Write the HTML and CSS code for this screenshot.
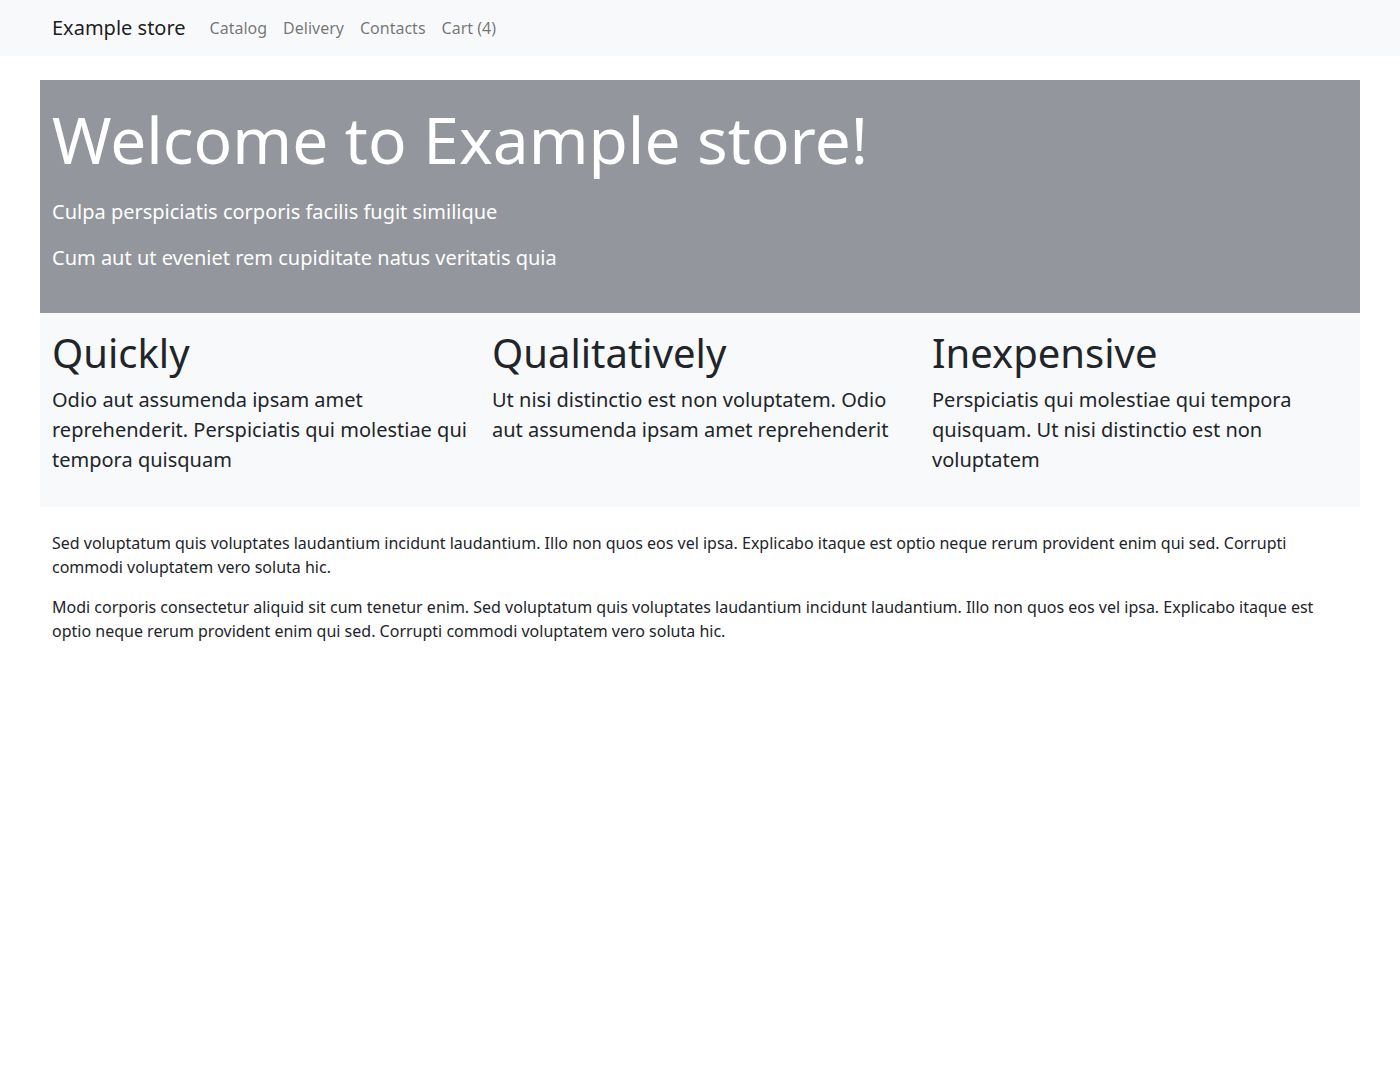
FILE: index.html
```html
<!DOCTYPE html>
<html lang="en">
<head>
<meta charset="utf-8">
<title>Example store</title>
<link rel="stylesheet" href="styles.css">
</head>
<body>
<nav class="navbar">
  <div class="container nav-inner">
    <a class="brand" href="#">Example store</a>
    <ul class="nav">
      <li><a class="nav-link" href="#">Catalog</a></li>
      <li><a class="nav-link" href="#">Delivery</a></li>
      <li><a class="nav-link" href="#">Contacts</a></li>
      <li><a class="nav-link" href="#">Cart (4)</a></li>
    </ul>
  </div>
</nav>
<main class="container main">
  <section class="hero">
    <h1 class="hero-title">Welcome to Example store!</h1>
    <p class="lead">Culpa perspiciatis corporis facilis fugit similique</p>
    <p class="lead">Cum aut ut eveniet rem cupiditate natus veritatis quia</p>
  </section>
  <section class="features">
    <div class="feature">
      <h2 class="feature-title">Quickly</h2>
      <p class="lead dark">Odio aut assumenda ipsam amet reprehenderit. Perspiciatis qui molestiae qui tempora quisquam</p>
    </div>
    <div class="feature">
      <h2 class="feature-title">Qualitatively</h2>
      <p class="lead dark">Ut nisi distinctio est non voluptatem. Odio aut assumenda ipsam amet reprehenderit</p>
    </div>
    <div class="feature">
      <h2 class="feature-title">Inexpensive</h2>
      <p class="lead dark">Perspiciatis qui molestiae qui tempora quisquam. Ut nisi distinctio est non voluptatem</p>
    </div>
  </section>
  <section class="text">
    <p>Sed voluptatum quis voluptates laudantium incidunt laudantium. Illo non quos eos vel ipsa. Explicabo itaque est optio neque rerum provident enim qui sed. Corrupti commodi voluptatem vero soluta hic.</p>
    <p>Modi corporis consectetur aliquid sit cum tenetur enim. Sed voluptatum quis voluptates laudantium incidunt laudantium. Illo non quos eos vel ipsa. Explicabo itaque est optio neque rerum provident enim qui sed. Corrupti commodi voluptatem vero soluta hic.</p>
  </section>
</main>
</body>
</html>
```
FILE: styles.css
```css
* { box-sizing: border-box; }
body {
  margin: 0;
  font-family: "Noto Sans", "Liberation Sans", sans-serif;
  font-size: 16px;
  line-height: 1.5;
  color: #212529;
  background: #fff;
}
a { text-decoration: none; }
p { margin: 0 0 16px; }
.container {
  width: 1320px;
  margin: 0 auto;
  padding: 0 12px;
}
.navbar {
  background: #f8f9fa;
  padding: 8px 0;
}
.nav-inner {
  display: flex;
  align-items: center;
}
.brand {
  font-size: 20px;
  line-height: 30px;
  padding: 5px 0;
  margin-right: 16px;
  color: rgba(0,0,0,.9);
}
.nav {
  display: flex;
  list-style: none;
  margin: 0;
  padding: 0;
}
.nav-link {
  display: block;
  padding: 8px;
  line-height: 24px;
  color: rgba(0,0,0,.55);
}
.main {
  margin-top: 24px;
  padding: 0;
}
.hero {
  background: #93969c;
  color: #fff;
  padding: 22px 12px 24px;
}
.hero-title {
  margin: 0 0 18px;
  font-size: 64px;
  font-weight: 400;
  line-height: 1.2;
}
.lead {
  font-size: 20px;
  line-height: 30px;
}
.features {
  background: #f8f9fa;
  display: grid;
  grid-template-columns: repeat(3, 1fr);
  padding: 16px 0;
}
.feature {
  padding: 0 12px;
}
.feature-title {
  margin: 0 0 8px;
  font-size: 40px;
  font-weight: 400;
  line-height: 1.2;
}
.text {
  padding: 24px 12px 0;
}
```
